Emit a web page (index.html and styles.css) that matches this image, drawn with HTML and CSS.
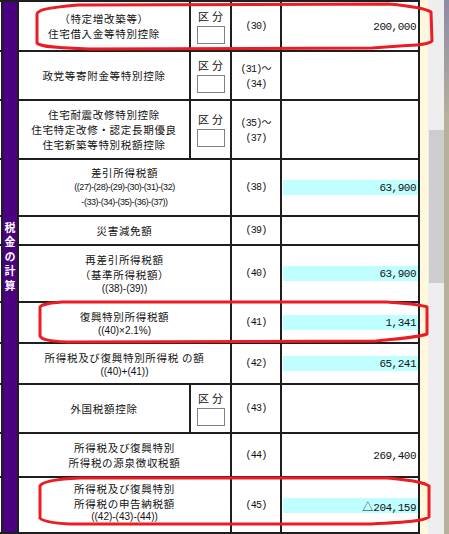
FILE: index.html
```html
<!DOCTYPE html>
<html lang="ja">
<head>
<meta charset="utf-8">
<link rel="stylesheet" href="styles.css">
</head>
<body>
<div class="screen">
  <div class="sheet">
    <div class="side"><span class="side-text">税金の計算</span></div>

    <div class="stub"></div>
    <div class="cell label"><div class="ln">（特定増改築等）</div><div class="ln">住宅借入金等特別控除</div></div>
    <div class="cell kubun"><div class="kb-label">区分</div><div class="kb-box"></div></div>
    <div class="cell num"><div>(30)</div></div>
    <div class="cell val"><div class="box">200,000</div></div>

    <div class="stub"></div>
    <div class="cell label"><div class="ln">政党等寄附金等特別控除</div></div>
    <div class="cell kubun"><div class="kb-label">区分</div><div class="kb-box"></div></div>
    <div class="cell num"><div>(31)<span class="wave">～</span></div><div>(34)</div></div>
    <div class="cell val"></div>

    <div class="stub"></div>
    <div class="cell label"><div class="ln">住宅耐震改修特別控除</div><div class="ln">住宅特定改修・認定長期優良</div><div class="ln">住宅新築等特別税額控除</div></div>
    <div class="cell kubun"><div class="kb-label">区分</div><div class="kb-box"></div></div>
    <div class="cell num"><div>(35)<span class="wave">～</span></div><div>(37)</div></div>
    <div class="cell val"></div>

    <div class="stub"></div>
    <div class="cell label wide"><div class="ln">差引所得税額</div><div class="sm tiny">((27)-(28)-(29)-(30)-(31)-(32)</div><div class="sm tiny">-(33)-(34)-(35)-(36)-(37))</div></div>
    <div class="cell num"><div>(38)</div></div>
    <div class="cell val"><div class="box hl">63,900</div></div>

    <div class="stub"></div>
    <div class="cell label wide"><div class="ln">災害減免額</div></div>
    <div class="cell num"><div>(39)</div></div>
    <div class="cell val"></div>

    <div class="stub"></div>
    <div class="cell label wide"><div class="ln">再差引所得税額</div><div class="ln">（基準所得税額）</div><div class="sm">((38)-(39))</div></div>
    <div class="cell num"><div>(40)</div></div>
    <div class="cell val"><div class="box hl">63,900</div></div>

    <div class="stub"></div>
    <div class="cell label wide"><div class="ln">復興特別所得税額</div><div class="sm">((40)×2.1%)</div></div>
    <div class="cell num"><div>(41)</div></div>
    <div class="cell val"><div class="box hl">1,341</div></div>

    <div class="stub"></div>
    <div class="cell label wide"><div class="ln">所得税及び復興特別所得税 の額</div><div class="sm">((40)+(41))</div></div>
    <div class="cell num"><div>(42)</div></div>
    <div class="cell val"><div class="box hl">65,241</div></div>

    <div class="stub"></div>
    <div class="cell label"><div class="ln">外国税額控除</div></div>
    <div class="cell kubun"><div class="kb-label">区分</div><div class="kb-box"></div></div>
    <div class="cell num"><div>(43)</div></div>
    <div class="cell val"></div>

    <div class="stub"></div>
    <div class="cell label wide"><div class="ln">所得税及び復興特別</div><div class="ln">所得税の源泉徴収税額</div></div>
    <div class="cell num"><div>(44)</div></div>
    <div class="cell val"><div class="box">269,400</div></div>

    <div class="stub"></div>
    <div class="cell label wide last"><div class="ln">所得税及び復興特別</div><div class="ln">所得税の申告納税額</div><div class="sm">((42)-(43)-(44))</div></div>
    <div class="cell num"><div>(45)</div></div>
    <div class="cell val"><div class="box hl"><span class="tri">△</span>204,159</div></div>
  </div>
  <div class="cream"></div>
  <div class="scroll"><div class="thumb"></div></div>
  <div class="edge"></div>

  <svg class="marks" width="449" height="534" viewBox="0 0 449 534">
    <path d="M 78 5 L 389 4 C 410 6, 425 8, 431 12 L 432 41 C 428 45, 415 45, 400 46 L 372 48 L 90 49 C 60 48, 40 47, 37 43 L 37 14 C 38 10, 45 8, 78 5 Z"/>
    <path d="M 62 302 L 387 302 C 400 303, 420 304, 427 307 L 427 334 C 420 337, 405 338, 376 341 L 67 342 C 50 341, 42 340, 40 336 L 40 307 C 42 304, 50 303, 62 302 Z"/>
    <path d="M 80 478 L 387 478 C 405 480, 422 481, 429 486 L 429 517 C 422 521, 410 522, 371 524 L 70 524 C 52 523, 42 521, 40 518 L 40 486 C 42 482, 55 479, 80 478 Z"/>
  </svg>
</div>
</body>
</html>
```

FILE: styles.css
```css
html, body {
  margin: 0;
  padding: 0;
}
body {
  width: 449px;
  height: 534px;
  overflow: hidden;
  background: #ffffff;
  font-family: "Noto Sans CJK JP", "Noto Sans", sans-serif;
  color: #111111;
}
.screen {
  position: relative;
  display: flex;
  height: 534px;
}
.sheet {
  flex: none;
  width: 420px;
  height: 534px;
  box-sizing: border-box;
  padding: 2px 2px 2px 0;
  background: #1e1e1e;
  display: grid;
  grid-template-columns: 1px 14px 170px 39px 48px 136px;
  grid-template-rows: 48px 47px 57px 55px 27px 55px 39px 39px 47px 42px 54px;
  gap: 2px;
}
.side {
  grid-column: 2;
  grid-row: 1 / -1;
  background: #4b0082;
  display: flex;
  align-items: center;
  justify-content: center;
  padding-bottom: 17px;
}
.side-text {
  writing-mode: vertical-rl;
  text-orientation: upright;
  color: #ffffff;
  font-weight: bold;
  font-size: 11px;
  letter-spacing: 3.5px;
  line-height: 14px;
}
.stub {
  background: #ffffff;
}
.cell {
  background: #ffffff;
  display: flex;
  flex-direction: column;
  align-items: center;
  justify-content: center;
  text-align: center;
  min-width: 0;
}
.label.wide {
  grid-column: span 2;
}
.label.last {
  padding-bottom: 6px;
}
.label.last .sm {
  line-height: 12px;
}
.ln {
  font-size: 10.5px;
  letter-spacing: 0.7px;
  line-height: 15px;
  white-space: nowrap;
}
.sm {
  font-family: "Liberation Sans", sans-serif;
  font-size: 10px;
  line-height: 13px;
  white-space: nowrap;
}
.sm.tiny {
  font-size: 9px;
  letter-spacing: -0.45px;
  line-height: 15px;
}
.kb-label {
  font-size: 11px;
  line-height: 14px;
  letter-spacing: 3px;
  padding-left: 3px;
}
.kb-box {
  width: 28px;
  height: 18px;
  box-sizing: border-box;
  border: 1px solid #808080;
  margin-top: 3px;
  background: #ffffff;
}
.num {
  font-family: "Liberation Mono", monospace;
  font-size: 10px;
  letter-spacing: -0.8px;
  line-height: 15px;
}
.wave {
  font-family: "Noto Sans CJK JP", sans-serif;
  font-size: 10px;
  letter-spacing: 0;
}
.val {
  align-items: stretch;
}
.box {
  height: 15px;
  margin-left: 1px;
  padding-right: 2px;
  text-align: right;
  font-family: "Liberation Mono", monospace;
  font-size: 11px;
  letter-spacing: -0.5px;
  line-height: 16px;
}
.box.hl {
  background: #c0ffff;
}
.tri {
  font-family: "Noto Sans CJK JP", sans-serif;
  font-size: 11px;
  letter-spacing: 0;
}
.cream {
  flex: none;
  width: 8px;
  background: #fff8dc;
}
.scroll {
  flex: none;
  width: 16px;
  background: #eeeeee;
  padding-top: 130px;
  box-sizing: border-box;
}
.thumb {
  margin-left: 1px;
  height: 153px;
  background: #cdcdcd;
}
.edge {
  flex: 1;
  background: linear-gradient(#8c8aa6 0, #b7b19c 120px, #b7b19c 100%);
}
.marks {
  position: absolute;
  left: 0;
  top: 0;
  pointer-events: none;
}
.marks path {
  fill: none;
  stroke: #ec1c24;
  stroke-width: 3;
  stroke-linejoin: round;
}
```
